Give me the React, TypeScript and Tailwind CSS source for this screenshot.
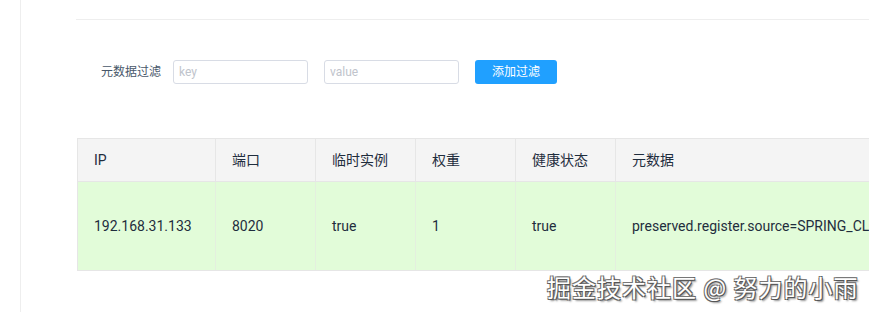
import React from 'react';

const columns = [
  { title: 'IP', width: 'w-[138px]' },
  { title: '端口', width: 'w-[100px]' },
  { title: '临时实例', width: 'w-[100px]' },
  { title: '权重', width: 'w-[100px]' },
  { title: '健康状态', width: 'w-[100px]' },
  { title: '元数据', width: 'w-[400px]' },
];

const row = ['192.168.31.133', '8020', 'true', '1', 'true', 'preserved.register.source=SPRING_CLOUD'];

const App = () => {
  return (
    <div
      className="relative flex w-[869px] h-[312px] overflow-hidden bg-white text-[#1f2d3d]"
      style={{ fontFamily: 'Roboto, "Noto Sans CJK SC", sans-serif' }}
    >
      <div className="w-[21px] shrink-0 border-r border-[#eeeeee]" />
      <div className="flex-1 pl-[55px]">
        <div className="h-[20px] border-b border-[#eeeeee]" />

        <div className="mt-[40px] flex items-center h-[24px] pl-[25px]">
          <span className="text-[12px] text-[#48576a] mr-[12px]">元数据过滤</span>
          <input
            placeholder="key"
            className="w-[135px] h-[24px] rounded-[3px] border border-[#d8dce5] px-[5px] text-[12px] placeholder:text-[#c0c4cc] outline-none"
          />
          <input
            placeholder="value"
            className="ml-[16px] w-[135px] h-[24px] rounded-[3px] border border-[#d8dce5] px-[5px] text-[12px] placeholder:text-[#c0c4cc] outline-none"
          />
          <button className="ml-[16px] w-[82px] h-[24px] rounded-[3px] bg-[#20a0ff] text-white text-[12px]">
            添加过滤
          </button>
        </div>

        <div className="mt-[54px] ml-[1px] w-[1000px] border-t border-l border-b border-[#e6e6e6]">
          <div className="flex h-[43px] bg-[#f4f4f4] border-b border-[#e6e6e6]">
            {columns.map((c) => (
              <div
                key={c.title}
                className={`${c.width} shrink-0 flex items-center pl-[16px] text-[14px] border-r border-[#e6e6e6]`}
              >
                {c.title}
              </div>
            ))}
          </div>
          <div className="flex h-[88px] bg-[#e2fcd9]">
            {row.map((v, i) => (
              <div
                key={i}
                className={`${columns[i].width} shrink-0 flex items-center pl-[16px] text-[14px] border-r border-[#e4efdf] whitespace-nowrap`}
              >
                {v}
              </div>
            ))}
          </div>
        </div>
      </div>

      <div
        className="absolute left-[547px] top-[269px] text-[24px] tracking-[1px] text-white whitespace-nowrap"
        style={{
          fontFamily: '"Noto Sans CJK SC", sans-serif',
          textShadow: '1px 1px 0 #555, -1px -1px 0 #777, 1px -1px 0 #666, -1px 1px 0 #666, 2px 2px 2px #888',
        }}
      >
        掘金技术社区 @ 努力的小雨
      </div>
    </div>
  );
};

export default App;
